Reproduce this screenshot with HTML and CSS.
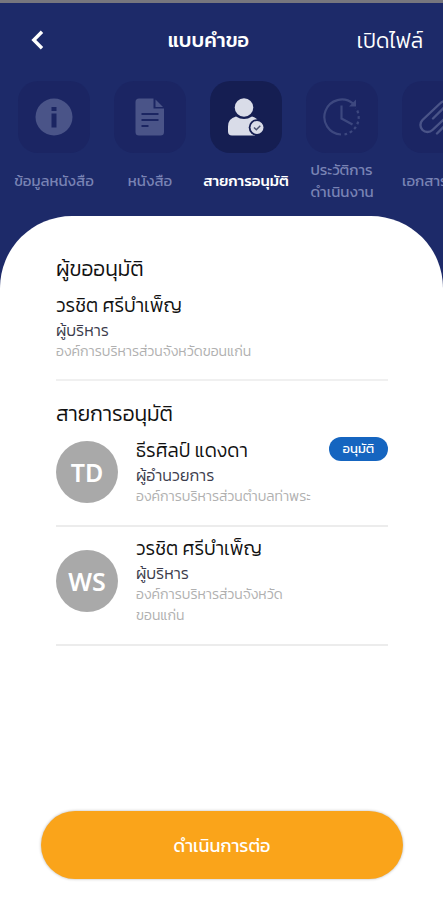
FILE: index.html
```html
<!DOCTYPE html>
<html lang="th">
<head>
    <meta charset="UTF-8">
    <meta name="viewport" content="width=device-width, initial-scale=1.0">
    <title>แบบคำขอ</title>
    <link rel="stylesheet" href="styles.css">
</head>
<body>
    <header class="header">
        <div class="top-bar">
            <button class="back-button" type="button" aria-label="ย้อนกลับ">
                <svg width="14" height="20" viewBox="0 0 14 20" fill="none" stroke="#fff" stroke-width="3.4">
                    <path d="M12 1.8 3.8 10l8.200 8.200"/>
                </svg>
            </button>
            <h1 class="title">แบบคำขอ</h1>
            <a class="open-file" href="#">เปิดไฟล์</a>
        </div>
        <nav class="tabs">
            <a class="tab" href="#">
                <span class="tab-icon">
                    <svg width="38" height="38" viewBox="0 0 38 38">
                        <circle cx="19" cy="19" r="18.5" fill="#4a5488"/>
                        <path d="M16.500 9h5v4h-5zM16.500 15.500h5v14h-5z" fill="#1b2562"/>
                    </svg>
                </span>
                <span class="tab-label">ข้อมูลหนังสือ</span>
            </a>
            <a class="tab" href="#">
                <span class="tab-icon">
                    <svg width="38" height="38" viewBox="0 0 38 38">
                        <path d="M8 .5h14.500V10.500H33V34a3.500 3.500 0 0 1-3.500 3.500H8A3.500 3.500 0 0 1 4.500 34V4A3.500 3.500 0 0 1 8 .5z" fill="#4a5488"/>
                        <path d="M24.500 1.500 32 9h-7.500z" fill="#4a5488"/>
                        <path d="M10.500 16h17M10.500 22h17M10.500 28h7" stroke="#1b2562" stroke-width="2"/>
                    </svg>
                </span>
                <span class="tab-label">หนังสือ</span>
            </a>
            <a class="tab active" href="#" aria-current="page">
                <span class="tab-icon">
                    <svg width="38" height="38" viewBox="0 0 38 38">
                        <circle cx="17" cy="9.5" r="9.3" fill="#d9dce8"/>
                        <path d="M9 18.500q8 5 16 0 5 1 7 6l-4 13H5q-4 0-4-4v-5q0-8 8-10z" fill="#d9dce8"/>
                        <circle cx="30" cy="29.5" r="8.300" fill="#151e52"/>
                        <circle cx="30" cy="29.5" r="6.500" fill="#d9dce8"/>
                        <path d="M27 29.500l2.300 2.200 4-4" fill="none" stroke="#4a5270" stroke-width="1.500"/>
                    </svg>
                </span>
                <span class="tab-label">สายการอนุมัติ</span>
            </a>
            <a class="tab" href="#">
                <span class="tab-icon">
                    <svg width="38" height="38" viewBox="0 0 38 38" fill="none" stroke="#3d487f" stroke-width="2.2">
                        <path d="M18 36.500A17.500 17.500 0 1 1 30 5.500"/>
                        <path d="M33 1.500v7h-7z" fill="#3d487f" stroke="none"/>
                        <path d="M21.500 36.500A17.500 17.500 0 0 0 33 10" stroke-dasharray="2.800 2.800"/>
                        <path d="M18.500 7.500V20.500l11 6"/>
                    </svg>
                </span>
                <span class="tab-label">ประวัติการ<br>ดำเนินงาน</span>
            </a>
            <a class="tab" href="#">
                <span class="tab-icon">
                    <svg width="38" height="38" viewBox="0 0 38 38" fill="none" stroke="#4a5488" stroke-width="2.4" stroke-linecap="round">
                        <path d="M14 20.500 24 10.500a4 4 0 0 1 6 6L13.500 32a7 7 0 0 1-10-10L21 5.500a9.500 9.500 0 0 1 13.500 13.500L18 35.500"/>
                    </svg>
                </span>
                <span class="tab-label">เอกสารแนบ</span>
            </a>
        </nav>
    </header>
    <main class="sheet">
        <section class="section">
            <h2 class="section-title">ผู้ขออนุมัติ</h2>
            <div class="requester">
                <p class="name">วรชิต ศรีบำเพ็ญ</p>
                <p class="position">ผู้บริหาร</p>
                <p class="agency">องค์การบริหารส่วนจังหวัดขอนแก่น</p>
            </div>
        </section>
        <section class="section">
            <h2 class="section-title">สายการอนุมัติ</h2>
            <ul class="approvers">
                <li class="approver">
                    <span class="avatar">TD</span>
                    <div class="info">
                        <p class="name">ธีรศิลป์ แดงดา</p>
                        <p class="position">ผู้อำนวยการ</p>
                        <p class="agency">องค์การบริหารส่วนตำบลท่าพระ</p>
                    </div>
                    <span class="badge">อนุมัติ</span>
                </li>
                <li class="approver">
                    <span class="avatar">WS</span>
                    <div class="info">
                        <p class="name">วรชิต ศรีบำเพ็ญ</p>
                        <p class="position">ผู้บริหาร</p>
                        <p class="agency">องค์การบริหารส่วนจังหวัด<br>ขอนแก่น</p>
                    </div>
                </li>
            </ul>
        </section>
        <button class="continue-button" type="button">ดำเนินการต่อ</button>
    </main>
</body>
</html>
```
FILE: styles.css
```css
* {
    margin: 0;
    padding: 0;
    box-sizing: border-box;
}
body {
    display: flex;
    flex-direction: column;
    min-height: 100vh;
    font-family: Kanit, Prompt, "Noto Sans Thai", "Noto Sans", sans-serif;
    background-color: #1d2a69;
    border-top: 3px solid #77767e;
    overflow-x: hidden;
}
a {
    color: inherit;
    text-decoration: none;
}
button {
    font-family: inherit;
    border: none;
    cursor: pointer;
}
.top-bar {
    display: flex;
    justify-content: space-between;
    align-items: center;
    height: 74px;
    padding: 0 20px 0 28px;
    color: white;
}
.back-button {
    display: flex;
    padding: 2px 16px 2px 2px;
    background: none;
}
.title {
    font-size: 20px;
    font-weight: 500;
}
.open-file {
    font-size: 21px;
    font-weight: 300;
}
.tabs {
    display: flex;
    height: 139px;
    padding: 4px 0 0 6px;
    overflow: hidden;
}
.tab {
    display: flex;
    flex-direction: column;
    align-items: center;
    flex: 0 0 96px;
    color: #7983b4;
}
.tab-icon {
    display: flex;
    align-items: center;
    justify-content: center;
    width: 72px;
    height: 72px;
    border-radius: 20px;
    background-color: #1b2563;
}
.tab-label {
    display: flex;
    align-items: center;
    height: 44px;
    margin-top: 6px;
    font-size: 15px;
    line-height: 22px;
    white-space: nowrap;
}
.active {
    color: white;
}
.active .tab-icon {
    background-color: #151e52;
}
.active .tab-label {
    font-weight: 500;
}
.sheet {
    display: flex;
    flex-direction: column;
    flex: 1;
    padding: 38px 55px 21px 56px;
    border-radius: 72px 72px 0 0;
    background-color: white;
}
.section-title {
    font-size: 21px;
    font-weight: 300;
    line-height: 30px;
    color: #111;
}
.requester {
    margin-bottom: 18px;
    padding: 8px 0 17px;
    border-bottom: 2px solid #f0f0f0;
}
.name {
    font-size: 19px;
    font-weight: 300;
    line-height: 28px;
    color: #111;
}
.position {
    font-size: 16px;
    font-weight: 300;
    line-height: 21px;
    color: #3c3c4c;
}
.agency {
    font-size: 14px;
    font-weight: 300;
    line-height: 21px;
    color: #b0b0b0;
}
.approvers {
    list-style: none;
}
.approver {
    display: flex;
    align-items: center;
    gap: 18px;
    padding: 8px 0 18px;
    border-bottom: 2px solid #ececec;
}
.avatar {
    display: flex;
    align-items: center;
    justify-content: center;
    flex: 0 0 62px;
    height: 62px;
    border-radius: 50%;
    background-color: #a9a9a9;
    color: white;
    font-family: "Noto Sans", sans-serif;
    font-size: 25px;
    font-weight: 600;
}
.info {
    flex: 1;
    white-space: nowrap;
}
.badge {
    align-self: flex-start;
    width: 60px;
    border-radius: 12px;
    background-color: #1565c0;
    color: white;
    font-size: 13px;
    line-height: 24px;
    text-align: center;
}
.continue-button {
    height: 68px;
    margin: auto -15px 0;
    border-radius: 34px;
    background-color: #faa41a;
    box-shadow: 0 0 3px rgba(0, 0, 0, 0.3);
    color: white;
    font-size: 18px;
}
```
